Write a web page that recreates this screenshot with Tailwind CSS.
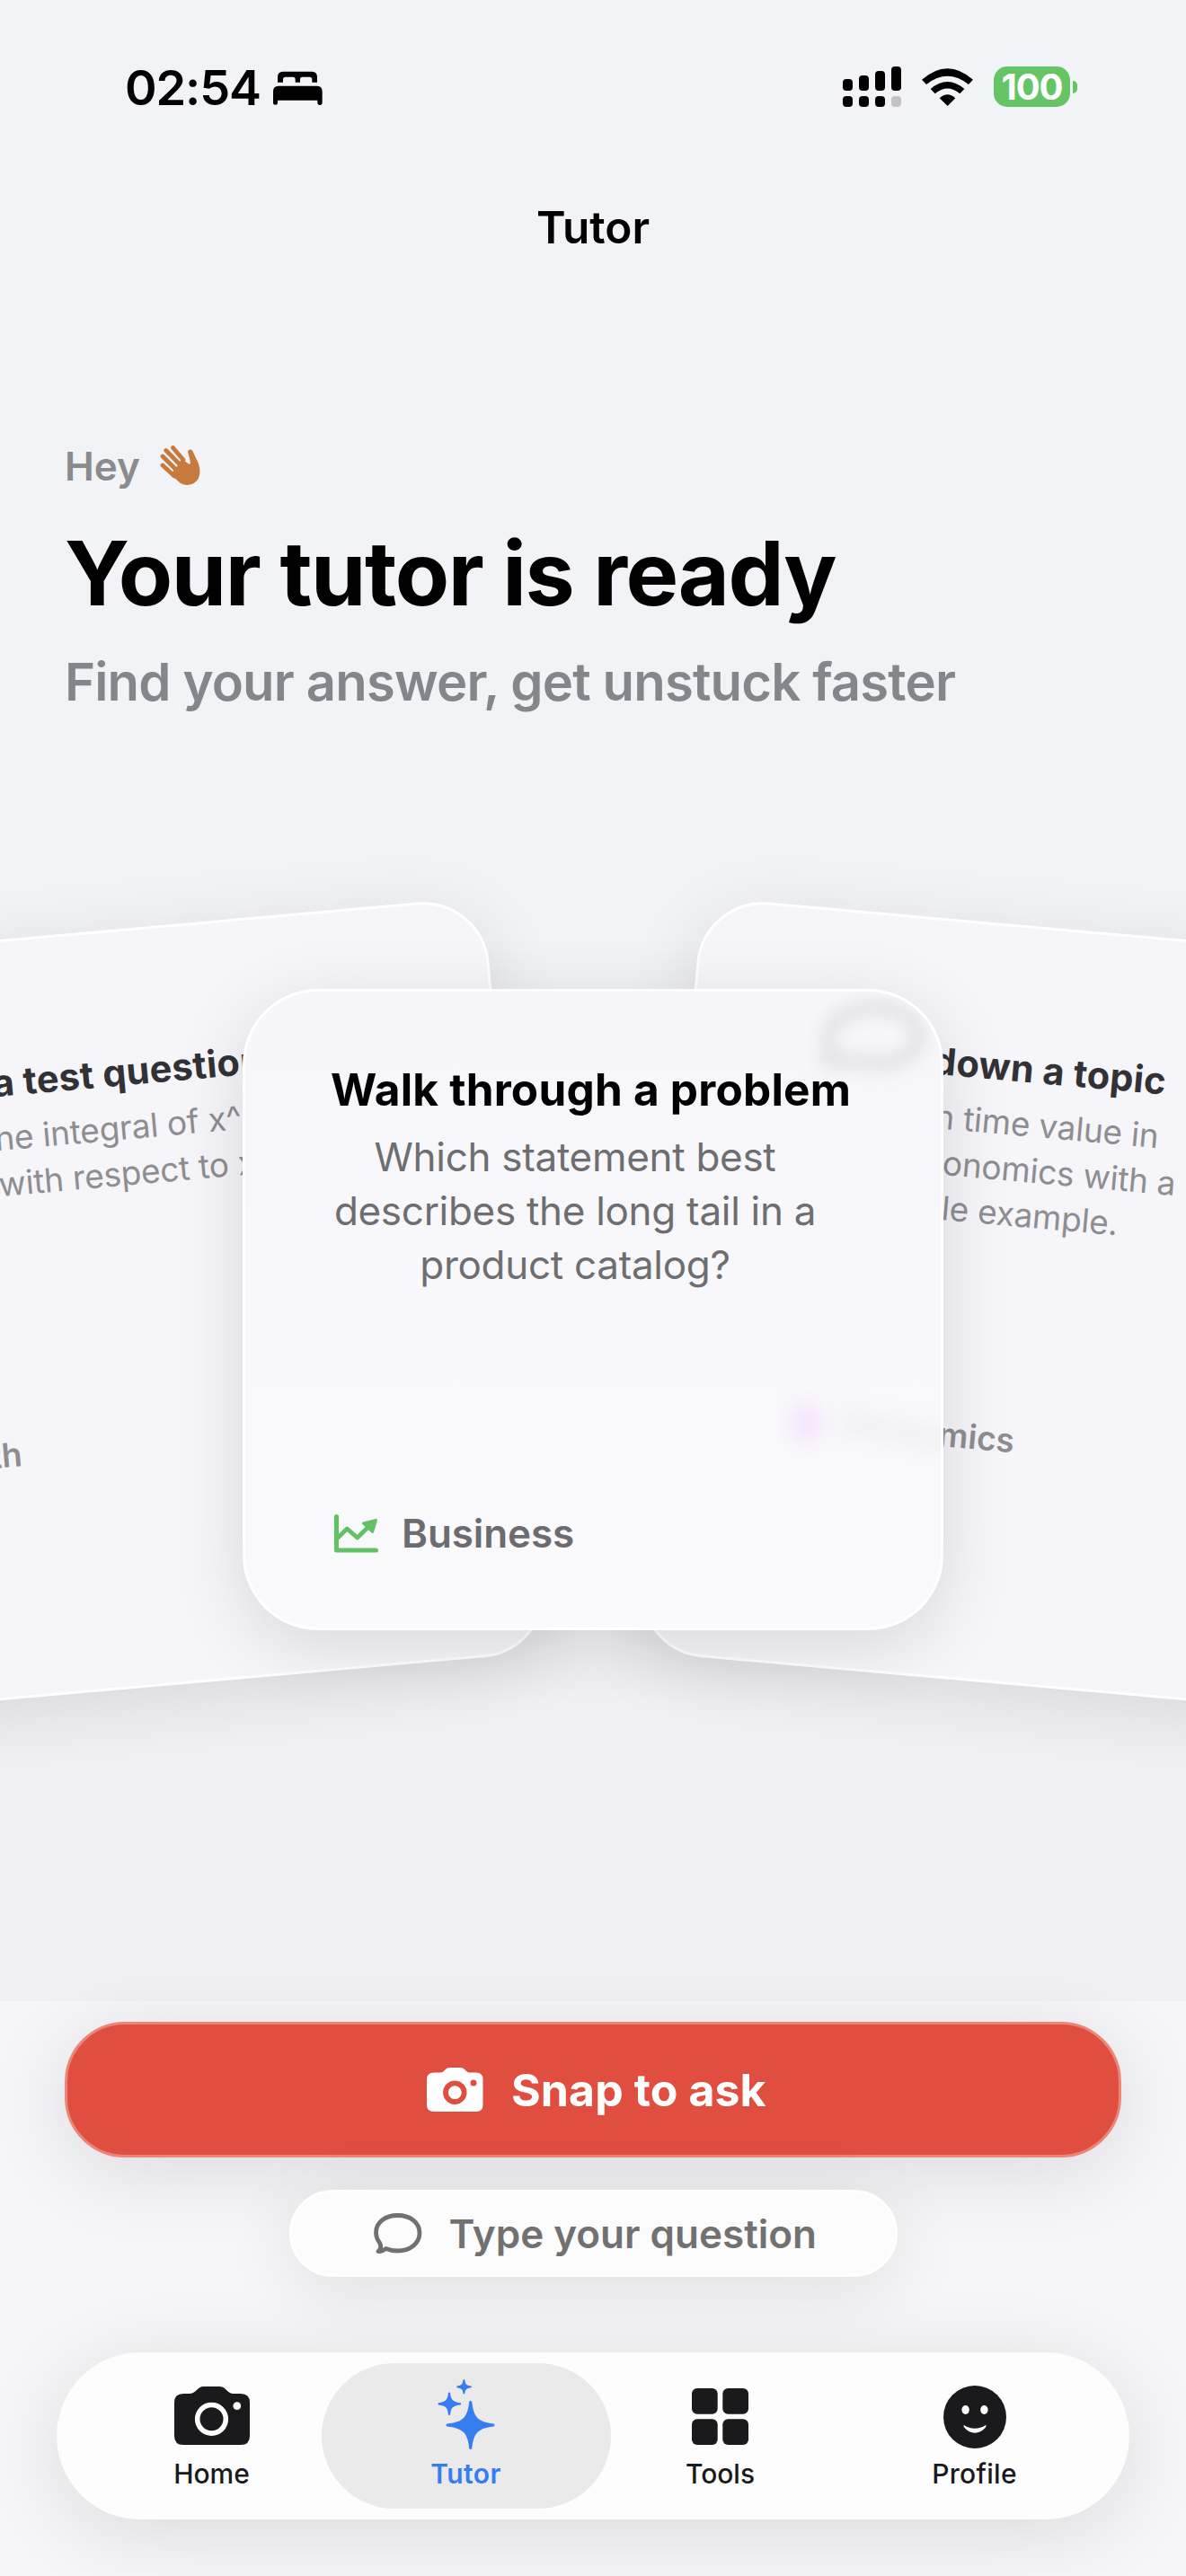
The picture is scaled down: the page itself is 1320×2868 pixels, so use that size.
<!DOCTYPE html>
<html lang="en">
<head>
  <meta charset="UTF-8" />
  <meta name="viewport" content="width=device-width, initial-scale=1.0" />
  <title>Tutor</title>
  <script src="https://cdn.jsdelivr.net/npm/@tailwindcss/browser@4"></script>
</head>
<body class="bg-[#f2f3f6] font-['Inter',sans-serif] text-black">
<div class="w-[1320px] h-[2868px] overflow-hidden flex flex-col bg-linear-to-b from-[#f2f3f6] from-35% to-[#f1f0f5] to-75%">

  <!-- Status bar -->
  <header class="mt-[58px] h-20 shrink-0 flex items-center pl-[139px] pr-[121px]">
    <span class="text-[54px] tracking-[-1.1px] font-semibold leading-none whitespace-nowrap">02:54</span>
    <svg class="ml-[14px] w-[55px] h-[38px]" viewBox="612 118 165 114">
      <path d="M627 156V138Q627 120 645 120H741Q759 120 759 138V156H742V146Q742 138 734 138H710Q702 138 702 146V156H686V146Q686 138 678 138H653Q645 138 645 146V156Z" />
      <path d="M612 186Q612 168 630 168H759Q776 168 776 186V224A7 7 0 0 1 760 224V216H627V224A7 7 0 0 1 612 224Z" />
    </svg>
    <div class="ml-auto mb-[3px] flex items-center">
      <svg class="w-[65px] h-[45px]" viewBox="0 0 65 45">
        <rect x="0" y="14" width="11" height="13" rx="4" />
        <rect x="18" y="10" width="11" height="17" rx="4" />
        <rect x="36" y="5" width="11" height="22" rx="4" />
        <rect x="54" y="0" width="11" height="27" rx="4" />
        <rect x="0" y="33" width="11" height="12" rx="4" />
        <rect x="18" y="33" width="11" height="12" rx="4" />
        <rect x="36" y="33" width="11" height="12" rx="4" />
        <rect x="54" y="33" width="11" height="12" rx="4" fill="#c3c3c7" />
      </svg>
      <svg class="ml-[23px] w-[57px] h-[42px]" viewBox="375 105 171 126">
        <path d="M375 143Q460.500 68 546 143L531 159Q460.500 104 390 159Z" />
        <path d="M404 174Q460.500 126 517 174L502 190Q460.500 155 419 190Z" />
        <path d="M434 205Q460.500 180 487 205L461 231Z" />
      </svg>
      <div class="ml-[23px] w-[85px] h-[45px] rounded-[15px] bg-[#65c466] flex items-center justify-center">
        <span class="text-[40px] tracking-[-1px] font-bold leading-none text-white">100</span>
      </div>
      <div class="ml-[3px] w-[5px] h-[14px] rounded-r-full bg-[#65c466]"></div>
    </div>
  </header>

  <h1 class="mt-[75px] h-20 shrink-0 text-center text-[49.5px] leading-[80px] font-semibold">Tutor</h1>

  <!-- Greeting -->
  <section class="mt-[196px] pl-[72px] shrink-0">
    <div class="h-[60px] flex items-center text-[#8a8a8f]">
      <span class="text-[44px] font-semibold leading-[60px]">Hey</span>
      <svg class="ml-[22px] w-[46px] h-[46px]" viewBox="0 0 46 46" fill="#c67a3d">
        <g stroke="#c67a3d" stroke-width="4.800" stroke-linecap="round">
          <path d="M14.500 2.500L26 16" />
          <path d="M6.800 5.500L22 21" />
          <path d="M3 12L18 27" />
          <path d="M3 22L16 34" />
        </g>
        <path d="M24 15L33 21C35 20 32.500 13 31.200 7.500C30.700 4.200 35.300 3.500 36.500 6.500L42 18C45.500 26 45 33 42 38C37 45 27 46 20.500 40L12 32L20 22Z" />
      </svg>
    </div>
    <h2 class="mt-[29px] text-[98.6px] leading-[120px] tracking-[-1.45px] font-bold whitespace-nowrap">Your tutor is ready</h2>
    <p class="mt-[21px] text-[58px] leading-[80px] tracking-[-0.83px] font-semibold text-[#85868b] whitespace-nowrap">Find your answer, get unstuck faster</p>
  </section>

  <!-- Fanned prompt cards -->
  <section class="relative h-[1429px] shrink-0">

    <article class="absolute left-[-242px] top-[199px] w-[780px] h-[844px] origin-top-right -rotate-[5.1deg] rounded-[74px] border-3 border-white bg-[#f6f6fa] shadow-[0_18px_80px_rgba(0,0,0,0.10)]">
      <h3 class="mt-[131px] ml-[90px] text-[41.5px] leading-[50px] tracking-[0.2px] font-bold text-[#323236] whitespace-nowrap">Solve a test question</h3>
      <p class="mt-3 ml-[77px] w-[470px] text-center text-[37px] leading-[50.5px] tracking-[-0.2px] text-[#8e8e92] whitespace-nowrap">Find the integral of x^2<br><span class="pl-[96px]">with respect to x.</span></p>
      <div class="mt-[251px] ml-[59px] flex items-center h-[50px]">
        <svg class="w-10 h-10" viewBox="0 0 40 40" fill="none" stroke="#4a8df0" stroke-width="4" stroke-linecap="round"><path d="M4 10H16M10 4V16M25 10H36M6 26L15 35M15 26L6 35M25 28H36M25 34H36" /></svg>
        <span class="ml-5 text-[37px] font-semibold text-[#8e8e92]">Math</span>
      </div>
    </article>

    <article class="absolute left-[782px] top-[199px] w-[780px] h-[844px] origin-top-left rotate-[5.1deg] rounded-[74px] border-3 border-white bg-[#f6f6fa] shadow-[0_18px_80px_rgba(0,0,0,0.10)]">
      <h3 class="mt-[131px] ml-[141px] text-[41.5px] leading-[50px] tracking-[0.2px] font-bold text-[#323236] whitespace-nowrap">Break down a topic</h3>
      <p class="mt-3 ml-[140px] w-[420px] text-center text-[37px] leading-[50.5px] tracking-[-0.2px] text-[#8e8e92] whitespace-nowrap">Explain time value in<br>microeconomics with a<br>simple example.</p>
      <div class="mt-[200px] ml-[144px] flex items-center h-[50px]">
        <div class="w-9 h-9 rounded-full bg-[#c56bf0]"></div>
        <span class="ml-5 text-[37px] font-semibold text-[#8e8e92]">Economics</span>
      </div>
    </article>

    <article class="absolute left-[270px] top-[302px] w-[780px] h-[714px] rounded-[84px] border-3 border-white bg-linear-to-b from-[#f7f7fb] to-[#fafafd] shadow-[0_18px_80px_rgba(0,0,0,0.12)] overflow-hidden">
      <!-- soft traces of the card behind the glass -->
      <svg class="absolute inset-0 w-full h-full" viewBox="0 0 774 708" fill="none">
        <path class="blur-[9px]" d="M648 76C656 62 644 56 652 38C662 22 690 18 706 18C742 20 754 42 748 58C740 78 712 82 694 78C676 76 664 80 648 76Z" stroke="#e2e2e6" stroke-width="17" />
        <ellipse class="blur-[11px]" cx="625" cy="480" rx="17" ry="22" fill="#f5e2fc" />
        <path class="blur-[10px]" d="M662 478L790 502" stroke="#f1f1f4" stroke-width="26" />
      </svg>
      <div class="relative pl-[95px]">
        <h3 class="mt-[79px] text-[49.5px] leading-[60px] tracking-[0.22px] font-bold whitespace-nowrap">Walk through a problem</h3>
        <p class="mt-[15px] w-[544px] text-center text-[44px] leading-[60px] tracking-[-0.3px] text-[#6e6e71] whitespace-nowrap">Which statement best<br>describes the long tail in a<br>product catalog?</p>
        <div class="mt-[239px] ml-1 h-[60px] flex items-center">
          <svg class="w-[49px] h-[43px]" viewBox="0 0 49 43" fill="none" stroke="#62c165" stroke-linecap="round" stroke-linejoin="round">
            <path d="M2.500 2.500V40H46.500" stroke-width="5" />
            <path d="M3 27L14.300 16L25.700 26L38 14" stroke-width="4.800" />
            <path d="M46.500 6.500L32.500 10L42.500 19.500Z" fill="#62c165" stroke-width="3" />
          </svg>
          <span class="ml-[26px] text-[44px] tracking-[-0.1px] font-semibold text-[#6c6b70]">Business</span>
        </div>
      </div>
    </article>
  </section>

  <!-- Ask actions and tab bar -->
  <footer class="h-[640px] shrink-0 bg-[#f6f6f8] pt-[23px] flex flex-col items-center">
    <button class="w-[1176px] h-[151px] shrink-0 rounded-[67px] border-3 border-[#ea8579] bg-[#e04e3f] shadow-[0_15px_90px_rgba(0,0,0,0.11)] flex items-center pl-[400px] text-white">
      <svg class="w-[63px] h-[50px]" viewBox="0 0 63 50" fill="white">
        <path d="M8 5.500H15C20 5.500 20 0 26 0H37C43 0 43 5.500 48 5.500H55Q62.500 5.500 62.500 13V41.500Q62.500 49 55 49H8Q0 49 0 41.500V13Q0 5.500 8 5.500Z" />
        <circle cx="31.300" cy="27.700" r="10.300" fill="none" stroke="#e04e3f" stroke-width="5.800" />
        <circle cx="52" cy="17" r="3.500" fill="#e04e3f" />
      </svg>
      <span class="ml-[31px] text-[50px] tracking-[0.1px] leading-none font-bold whitespace-nowrap">Snap to ask</span>
    </button>

    <button class="mt-9 w-[677px] h-[97px] shrink-0 rounded-full border-3 border-white bg-[#fcfcfc] shadow-[0_15px_80px_rgba(0,0,0,0.09)] flex items-center pl-[91px] text-[#717171]">
      <svg class="w-[54px] h-[46px]" viewBox="0 0 54 46" fill="none" stroke="#717171" stroke-width="4.800" stroke-linejoin="round">
        <path d="M5 42.500C8 40 8.500 36.500 6.500 33C3.500 29 2.500 25.500 2.500 21.500C2.500 10.500 12.500 2.500 26.500 2.500S51 10.500 51 22S40.500 42 26.500 42C21.500 42 17 41 13.500 39.500C11 41.500 7.500 43 5 42.500Z" />
      </svg>
      <span class="ml-[30px] text-[44px] leading-none font-semibold whitespace-nowrap">Type your question</span>
    </button>

    <nav class="mt-[84px] w-[1194px] h-[186px] shrink-0 rounded-full bg-[#fdfdfe] shadow-[0_15px_90px_rgba(0,0,0,0.11)] flex items-center justify-center text-[#1a1a1c]">
      <a href="#" class="w-[283px] h-[162px] flex flex-col items-center">
        <svg class="mt-[26px] w-[84px] h-[65px]" viewBox="0 0 84 65">
          <path d="M10 8H16C25 8 25 0 33 0H50C58 0 58 8 67 8H74Q84 8 84 18V55Q84 65 74 65H10Q0 65 0 55V18Q0 8 10 8Z" fill="#1a1a1c" />
          <circle cx="41.500" cy="36.300" r="15.800" fill="none" stroke="white" stroke-width="5.600" />
          <circle cx="69.800" cy="21.700" r="4.400" fill="white" />
        </svg>
        <span class="mt-3 text-[30px] leading-10 font-medium">Home</span>
      </a>
      <a href="#" class="-mx-[19.5px] w-[322px] h-[162px] rounded-full bg-[#eaeaeb] flex flex-col items-center text-[#357df0]">
        <svg class="mt-[18px] w-[64px] h-[78px]" viewBox="0 0 64 78" fill="#357df0" stroke="#357df0" stroke-width="3" stroke-linejoin="round">
          <path d="M36.700 25.500C38.500 43 44 49 62 51C44 53 38.500 59 36.700 76.500C35 59 29.500 53 11 51C29.500 49 35 43 36.700 25.500Z" />
          <path d="M13 15.500C13.800 23.500 16.500 26.500 25 27.300C16.500 28.200 13.800 31 13 39C12.200 31 9.500 28.200 1.500 27.300C9.500 26.500 12.200 23.500 13 15.500Z" stroke-width="2.200" />
          <path d="M29.400 1C30 6 31.500 7.700 37 8.300C31.500 9 30 10.700 29.400 15.500C28.800 10.700 27 9 22 8.300C27 7.700 28.800 6 29.400 1Z" stroke-width="1.800" />
        </svg>
        <span class="mt-[7px] text-[30px] leading-10 tracking-[0.4px] font-semibold">Tutor</span>
      </a>
      <a href="#" class="w-[283px] h-[162px] flex flex-col items-center">
        <svg class="mt-[28px] w-[63px] h-[63px]" viewBox="0 0 63 63" fill="#1a1a1c">
          <rect x="0" y="0" width="28.700" height="28.700" rx="6" />
          <rect x="34.300" y="0" width="28.700" height="28.700" rx="6" />
          <rect x="0" y="34.300" width="28.700" height="28.700" rx="6" />
          <rect x="34.300" y="34.300" width="28.700" height="28.700" rx="6" />
        </svg>
        <span class="mt-3 text-[30px] leading-10 font-medium">Tools</span>
      </a>
      <a href="#" class="w-[283px] h-[162px] flex flex-col items-center">
        <svg class="mt-[25px] w-[70px] h-[70px]" viewBox="0 0 70 70">
          <circle cx="35" cy="35" r="35" fill="#1a1a1c" />
          <ellipse cx="24.600" cy="27" rx="4.200" ry="5" fill="white" />
          <ellipse cx="45.400" cy="27" rx="4.200" ry="5" fill="white" />
          <path d="M23 44C30 49 40 49 47 44C48 44.500 47.500 46 46.500 47C40 54.500 30 54.500 23.500 47C22.500 46 22 44.500 23 44Z" fill="white" />
        </svg>
        <span class="mt-2 text-[30px] leading-10 tracking-[0.3px] font-medium">Profile</span>
      </a>
    </nav>
  </footer>
</div>
</body>
</html>
